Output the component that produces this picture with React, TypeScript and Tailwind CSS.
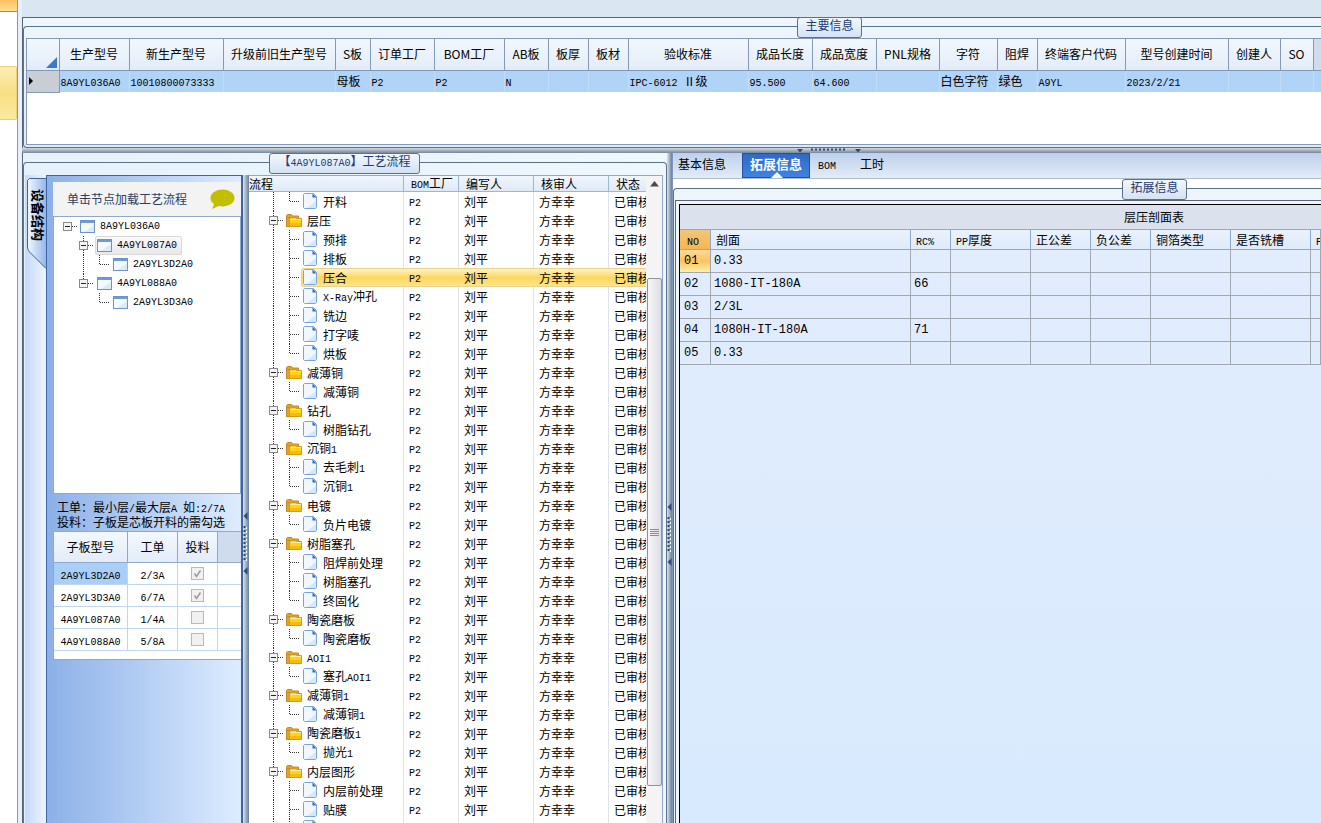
import React, { useState } from 'react';

interface Column {
  title: string;
  width: string;
  value: string;
}

const MAIN_COLUMNS: Column[] = [
  { title: '生产型号', width: 'w-[70px]', value: '8A9YL036A0' },
  { title: '新生产型号', width: 'w-[94px]', value: '10010800073333' },
  { title: '升级前旧生产型号', width: 'w-[112px]', value: '' },
  { title: 'S板', width: 'w-[35px]', value: '母板' },
  { title: '订单工厂', width: 'w-[64px]', value: 'P2' },
  { title: 'BOM工厂', width: 'w-[70px]', value: 'P2' },
  { title: 'AB板', width: 'w-[44px]', value: 'N' },
  { title: '板厚', width: 'w-[40px]', value: '' },
  { title: '板材', width: 'w-[40px]', value: '' },
  { title: '验收标准', width: 'w-[120px]', value: 'IPC-6012 Ⅱ级' },
  { title: '成品长度', width: 'w-[64px]', value: '95.500' },
  { title: '成品宽度', width: 'w-[64px]', value: '64.600' },
  { title: 'PNL规格', width: 'w-[63px]', value: '' },
  { title: '字符', width: 'w-[58px]', value: '白色字符' },
  { title: '阻焊', width: 'w-[40px]', value: '绿色' },
  { title: '终端客户代码', width: 'w-[88px]', value: 'A9YL' },
  { title: '型号创建时间', width: 'w-[103px]', value: '2023/2/21' },
  { title: '创建人', width: 'w-[52px]', value: '' },
  { title: 'SO', width: 'w-[33px]', value: '' },
];

interface StructureNode {
  name: string;
  level: number;
}

const STRUCTURE: StructureNode[] = [
  { name: '8A9YL036A0', level: 0 },
  { name: '4A9YL087A0', level: 1 },
  { name: '2A9YL3D2A0', level: 2 },
  { name: '4A9YL088A0', level: 1 },
  { name: '2A9YL3D3A0', level: 2 },
];

const SUB_BOARDS = [
  { model: '2A9YL3D2A0', order: '2/3A', checked: true },
  { model: '2A9YL3D3A0', order: '6/7A', checked: true },
  { model: '4A9YL087A0', order: '1/4A', checked: false },
  { model: '4A9YL088A0', order: '5/8A', checked: false },
];

interface ProcessRow {
  name: string;
  kind: 'group' | 'step' | 'last';
}

const PROCESS: ProcessRow[] = [
  { name: '开料', kind: 'last' },
  { name: '层压', kind: 'group' },
  { name: '预排', kind: 'step' },
  { name: '排板', kind: 'step' },
  { name: '压合', kind: 'step' },
  { name: 'X-Ray冲孔', kind: 'step' },
  { name: '铣边', kind: 'step' },
  { name: '打字唛', kind: 'step' },
  { name: '烘板', kind: 'last' },
  { name: '减薄铜', kind: 'group' },
  { name: '减薄铜', kind: 'last' },
  { name: '钻孔', kind: 'group' },
  { name: '树脂钻孔', kind: 'last' },
  { name: '沉铜1', kind: 'group' },
  { name: '去毛刺1', kind: 'step' },
  { name: '沉铜1', kind: 'last' },
  { name: '电镀', kind: 'group' },
  { name: '负片电镀', kind: 'last' },
  { name: '树脂塞孔', kind: 'group' },
  { name: '阻焊前处理', kind: 'step' },
  { name: '树脂塞孔', kind: 'step' },
  { name: '终固化', kind: 'last' },
  { name: '陶瓷磨板', kind: 'group' },
  { name: '陶瓷磨板', kind: 'last' },
  { name: 'AOI1', kind: 'group' },
  { name: '塞孔AOI1', kind: 'last' },
  { name: '减薄铜1', kind: 'group' },
  { name: '减薄铜1', kind: 'last' },
  { name: '陶瓷磨板1', kind: 'group' },
  { name: '抛光1', kind: 'last' },
  { name: '内层图形', kind: 'group' },
  { name: '内层前处理', kind: 'step' },
  { name: '贴膜', kind: 'step' },
  { name: '曝光', kind: 'step' },
];

const SECTION_COLUMNS = [
  { title: 'NO', width: 'w-[31px]' },
  { title: '剖面', width: 'w-[200px]' },
  { title: 'RC%', width: 'w-[40px]' },
  { title: 'PP厚度', width: 'w-[80px]' },
  { title: '正公差', width: 'w-[60px]' },
  { title: '负公差', width: 'w-[60px]' },
  { title: '铜箔类型', width: 'w-[80px]' },
  { title: '是否铣槽', width: 'w-[80px]' },
  { title: 'P', width: '' },
];

const SECTION_ROWS = [
  ['01', '0.33', ''],
  ['02', '1080-IT-180A', '66'],
  ['03', '2/3L', ''],
  ['04', '1080H-IT-180A', '71'],
  ['05', '0.33', ''],
];

const TABS = ['基本信息', '拓展信息', 'BOM', '工时'];

// Half-width characters are set in the mono face, the rest stays in the CJK face
const Mixed: React.FC<{ text: string }> = ({ text }) => (
  <>
    {text.split(/([\x20-\x7e]+)/).filter(Boolean).map((part, i) =>
      /^[\x20-\x7e]/.test(part) ? (
        <span key={i} className="whitespace-pre font-['Liberation_Mono',monospace] text-[10px] leading-none">{part}</span>
      ) : (
        <span key={i}>{part}</span>
      )
    )}
  </>
);

const Expander: React.FC<{ x: number }> = ({ x }) => (
  <>
    <rect x={x + 0.5} y="5.5" width="8" height="8" fill="#f4f4f4" stroke="#8a8a8a" />
    <path d={`M${x + 2} 9.5h5`} stroke="#222" />
  </>
);

const WindowIcon = () => (
  <svg width="16" height="14" viewBox="0 0 16 14" className="shrink-0">
    <rect x="0.5" y="0.5" width="14" height="12" fill="#f3f9fe" stroke="#6f93c4" />
    <rect x="1" y="1" width="13" height="2" fill="#6c9bdb" />
    <path d="M4 12L14 5v7z" fill="#dcebf8" />
  </svg>
);

const FolderIcon = () => (
  <svg width="17" height="14" viewBox="0 0 17 14" className="shrink-0">
    <path d="M0.5 12.5v-11l1-1h4l1 1.5h6v3" fill="#dca52c" stroke="#c08a2a" />
    <path d="M0.5 12.500h4v-9h-4z" fill="#dca52c" stroke="#c08a2a" />
    <path d="M3.5 4.5l2-1h4l1 1h5v8h-12z" fill="#ffd21c" stroke="#d99a12" />
    <path d="M4 9h11v3H4z" fill="#f9b90e" />
    <path d="M4 5.5h11" stroke="#fff0a0" />
  </svg>
);

const FileIcon = () => (
  <svg width="15" height="17" viewBox="0 0 15 17" className="shrink-0">
    <path d="M1.5 0.5h9l3 3v11l-1 1h-11l-1-1v-13z" fill="#f0f7ff" stroke="#78a5e2" />
    <path d="M13 8v7H4z" fill="#d5e7fb" />
    <path d="M9.500 0.500l4 4h-4z" fill="#2f69c6" />
  </svg>
);

const GroupTitle: React.FC<{ text: string; className: string }> = ({ text, className }) => (
  <div
    className={`absolute flex h-[21px] items-start justify-center whitespace-nowrap rounded-[3px] border border-[#5b7188] bg-linear-to-b from-[#f2f7fd] to-[#d4e2f3] leading-[14px] text-[#223a75] ${className}`}
  >
    <span><Mixed text={text} /></span>
  </div>
);

const VerticalGrip = () => (
  <svg width="5" height="63" viewBox="0 0 5 63">
    <path d="M4.500 0v8L0.500 4zM4.500 55v8L0.500 59z" fill="#2b4a80" />
    <path d="M1.500 14v36" stroke="#2b4a80" strokeWidth="2" strokeDasharray="2 2" />
    <path d="M3.500 15v36" stroke="#fff" strokeWidth="1" strokeDasharray="2 2" />
  </svg>
);

const MainInfo = () => (
  <section className="border-l border-t border-[#53677d] bg-linear-to-b from-[#f0f6fd] to-[#e0eaf8] pt-2">
    <div className="relative h-[122px] rounded-l-[4px] border-y border-l border-[#5b7188] pb-0.5 pl-0.5 pt-[11px]">
      <GroupTitle text="主要信息" className="-top-[10px] left-[773px] w-[65px]" />
      <div className="h-[107px] overflow-hidden border border-r-0 border-[#8499b5] bg-white">
        <table className="w-full table-fixed border-collapse">
          <thead>
            <tr className="h-[31px] bg-linear-to-b from-[#f3f8fe] to-[#e2ecf8]">
              <th className="w-[32px] border-b border-r border-[#8499b5] p-0">
                <svg width="11" height="11" viewBox="0 0 11 11" className="ml-auto mr-0.5 mt-4">
                  <path d="M11 0v11H0z" fill="#3f78d4" />
                </svg>
              </th>
              {MAIN_COLUMNS.map(col => (
                <th key={col.title} className={`${col.width} whitespace-nowrap border-b border-r border-[#8499b5] p-0 font-normal`}>
                  {col.title}
                </th>
              ))}
              <th className="border-b border-[#8499b5] bg-[#cfdcee] p-0" />
            </tr>
          </thead>
          <tbody>
            <tr className="h-[22px] bg-[#b0d3f8]">
              <td className="border-b border-r border-[#8499b5] bg-[#c9cdd4] p-0 pl-0.5">
                <svg width="5" height="8" viewBox="0 0 5 8"><path d="M0 0l4 4-4 4z" fill="#000" /></svg>
              </td>
              {MAIN_COLUMNS.map(col => (
                <td key={col.title} className="whitespace-nowrap border-r border-[#c3dcf8] p-0 pl-px">
                  <Mixed text={col.value} />
                </td>
              ))}
              <td className="p-0" />
            </tr>
          </tbody>
        </table>
      </div>
    </div>
  </section>
);

const StructureTree = () => {
  const [selected, setSelected] = useState('4A9YL087A0');

  return (
    <ul className="h-[278px] border border-[#8fa9cd] bg-white">
      {STRUCTURE.map((node, index) => (
        <li key={node.name} className="flex h-[19px] items-center">
          {node.level === 0 && (
            <svg width="24" height="19" className="shrink-0">
              <path d="M18 9.5h6" stroke="#333" strokeDasharray="1 1" />
              <Expander x={9} />
            </svg>
          )}
          {node.level === 1 && (
            <svg width="41" height="19" className="shrink-0">
              <path d={index === 1 ? 'M29.500 0v19' : 'M29.500 0v9'} stroke="#333" strokeDasharray="1 1" />
              <path d="M34 9.5h6" stroke="#333" strokeDasharray="1 1" />
              <Expander x={25} />
            </svg>
          )}
          {node.level === 2 && (
            <svg width="57" height="19" className="shrink-0">
              {index === 2 && <path d="M29.500 0v19" stroke="#333" strokeDasharray="1 1" />}
              <path d="M45.500 0v10M46 9.500h9" stroke="#333" strokeDasharray="1 1" fill="none" />
            </svg>
          )}
          <button
            type="button"
            onClick={() => setSelected(node.name)}
            className={`flex h-[19px] items-center gap-1 rounded-[2px] border pl-px pr-1 ${
              selected === node.name ? 'border-[#d9d9d9] bg-linear-to-b from-[#fafafa] to-[#e8e8e8]' : 'border-transparent'
            }`}
          >
            <WindowIcon />
            <Mixed text={node.name} />
          </button>
        </li>
      ))}
    </ul>
  );
};

const StructurePanel = () => (
  <div className="flex w-[218px] shrink-0">
    {/* Vertical tab */}
    <div className="w-[21px] shrink-0 bg-linear-to-r from-[#c6dafb] to-[#edf4ff]">
      <button type="button" className="relative mt-[2px] flex h-[93px] w-[21px] items-start">
        <svg width="21" height="93" viewBox="0 0 21 93" className="absolute left-0 top-0">
          <defs>
            <linearGradient id="tab" x1="0" x2="1">
              <stop offset="0" stopColor="#f2f8ff" />
              <stop offset="1" stopColor="#94b7ea" />
            </linearGradient>
          </defs>
          <path d="M21 1.500H4.500l-2 2V70c0 3 2 5 4 7L21 91.500" fill="url(#tab)" stroke="#3e5f97" />
        </svg>
        <span className="relative block pl-1.5 pt-3 text-left text-[13px] font-bold leading-[15px] [text-orientation:sideways] [writing-mode:vertical-rl]">
          设备结构
        </span>
      </button>
    </div>
    <div className="flex min-w-0 flex-1 flex-col border-l border-r-2 border-t border-[#3d65a3] bg-linear-to-r from-[#8cb0e7] to-[#deecff] pl-1.5 pt-1.5">
      <div className="flex h-[34px] items-center justify-between bg-[#f3f3f3] pl-3.5 pr-1.5">
        <span className="text-[#2b3d63]">单击节点加载工艺流程</span>
        <svg width="25" height="21" viewBox="0 0 25 21">
          <ellipse cx="12.500" cy="9" rx="12" ry="8.500" fill="#c0c000" />
          <path d="M5 13L2 20l9-4z" fill="#c0c000" />
        </svg>
      </div>
      <StructureTree />
      <div className="h-[37px] pl-1 pt-1.5 leading-[14px]">
        <p><Mixed text="工单：最小层/最大层A 如:2/7A" /></p>
        <p>投料：子板是芯板开料的需勾选</p>
      </div>
      <div className="h-[129px] overflow-hidden border border-r-0 border-[#8fa9cd] bg-white">
        <table className="w-full table-fixed border-separate border-spacing-0">
          <thead>
            <tr className="h-[31px] bg-linear-to-b from-[#f3f8fe] to-[#e2ecf8]">
              <th className="w-[74px] border-b border-r border-[#8fa9cd] p-0 font-normal">子板型号</th>
              <th className="w-[50px] border-b border-r border-[#8fa9cd] p-0 font-normal">工单</th>
              <th className="w-[40px] border-b border-r border-[#8fa9cd] p-0 font-normal">投料</th>
              <th className="border-b border-[#8fa9cd] bg-[#cfdcee] p-0" />
            </tr>
          </thead>
          <tbody>
            {SUB_BOARDS.map((row, index) => (
              <tr key={row.model} className="h-[22px]">
                <td className={`border-b border-r border-[#c0d6f0] p-0 text-center ${index === 0 ? 'bg-[#a9cff8]' : ''}`}>
                  <Mixed text={row.model} />
                </td>
                <td className="border-b border-r border-[#c0d6f0] p-0 text-center"><Mixed text={row.order} /></td>
                <td className="border-b border-r border-[#c0d6f0] p-0">
                  <label className="relative mx-auto block size-[13px]">
                    <input
                      type="checkbox"
                      aria-label={`投料 ${row.model}`}
                      defaultChecked={row.checked}
                      disabled
                      className="block size-[13px] appearance-none border border-[#b9b9b9] bg-[#f1f1f1]"
                    />
                    {row.checked && (
                      <svg width="13" height="13" viewBox="0 0 13 13" className="absolute left-0 top-0">
                        <path d="M3.500 6.500l2 3 4-6" fill="none" stroke="#9a9a9a" strokeWidth="1.500" />
                      </svg>
                    )}
                  </label>
                </td>
                <td className="border-b border-[#c0d6f0] p-0" />
              </tr>
            ))}
          </tbody>
        </table>
      </div>
    </div>
  </div>
);

const ProcessCell: React.FC<{ row: ProcessRow; active: boolean }> = ({ row, active }) => {
  if (row.kind === 'group') {
    return (
      <div className="flex h-[19px] items-center">
        <svg width="37" height="19" className="shrink-0">
          <path d="M24.500 0v19M29 9.500h6" stroke="#333" strokeDasharray="1 1" />
          <Expander x={20} />
        </svg>
        <FolderIcon />
        <span className="pl-1"><Mixed text={row.name} /></span>
      </div>
    );
  }
  return (
    <div className="flex h-[19px]">
      <svg width="52" height="19" className="shrink-0 bg-white">
        <path d="M24.500 0v19" stroke="#333" strokeDasharray="1 1" />
        <path d={row.kind === 'last' ? 'M40.500 0v10' : 'M40.500 0v19'} stroke="#333" strokeDasharray="1 1" />
        <path d="M41 9.500h9" stroke="#333" strokeDasharray="1 1" />
      </svg>
      <div
        className={`flex min-w-0 flex-1 items-center whitespace-nowrap border-y border-l pl-px ${
          active
            ? 'rounded-l-[3px] border-[#ead28f] bg-linear-to-b from-[#fff3c4] via-[#fdd75c] to-[#fee58c]'
            : 'border-transparent'
        }`}
      >
        <FileIcon />
        <span className="pl-[5px]"><Mixed text={row.name} /></span>
      </div>
    </div>
  );
};

const ProcessPanel = () => {
  const [current, setCurrent] = useState(4);

  return (
    <div className="flex min-w-0 flex-1 overflow-hidden border-r border-t border-[#8fa9cd] bg-white">
      <div className="min-w-0 flex-1 overflow-hidden">
        <table className="w-full table-fixed border-separate border-spacing-0">
          <thead>
            <tr className="h-[15px] bg-linear-to-b from-[#f1f6fd] to-[#dee9f6] text-left leading-[13px]">
              <th className="w-[155px] border-b border-r border-[#9fb6d3] p-0 font-normal">流程</th>
              <th className="w-[55px] whitespace-nowrap border-b border-r border-[#9fb6d3] p-0 pl-[7px] font-normal"><Mixed text="BOM工厂" /></th>
              <th className="w-[75px] border-b border-r border-[#9fb6d3] p-0 pl-[7px] font-normal">编写人</th>
              <th className="w-[75px] border-b border-r border-[#9fb6d3] p-0 pl-[7px] font-normal">核审人</th>
              <th className="whitespace-nowrap border-b border-[#9fb6d3] p-0 pl-[7px] font-normal">状态</th>
            </tr>
          </thead>
          <tbody>
            {PROCESS.map((row, index) => {
              const active = index === current;
              const cell = active
                ? 'border-y border-[#ead28f] bg-linear-to-b from-[#fff3c4] via-[#fdd75c] to-[#fee58c]'
                : 'border-r border-[#e0e3e8]';
              return (
                <tr key={index} onClick={() => setCurrent(index)} className="h-[19px] leading-[14px]">
                  <td className={active ? 'p-0' : 'border-r border-[#e0e3e8] p-0'}>
                    <ProcessCell row={row} active={active} />
                  </td>
                  <td className={`p-0 pl-[5px] ${cell}`}><Mixed text="P2" /></td>
                  <td className={`p-0 pl-[5px] ${cell}`}>刘平</td>
                  <td className={`p-0 pl-[5px] ${cell}`}>方幸幸</td>
                  <td className={`overflow-hidden whitespace-nowrap p-0 pl-[5px] ${active ? cell : ''}`}>已审核</td>
                </tr>
              );
            })}
          </tbody>
        </table>
      </div>
      {/* Scrollbar */}
      <div className="flex w-4 shrink-0 flex-col items-center bg-[#f4f4f5] pt-[5px]">
        <svg width="9" height="6" viewBox="0 0 9 6"><path d="M4.500 0L9 5.500H0z" fill="#4a4a4a" /></svg>
        <div className="mt-[91px] flex h-[508px] w-[15px] items-center justify-center rounded-[2px] border border-[#8d9298] bg-linear-to-r from-[#f6f6f8] to-[#dcdfe5]">
          <svg width="9" height="7" viewBox="0 0 9 7">
            <path d="M0 0.500h9M0 2.500h9M0 4.500h9M0 6.500h9" stroke="#8a8f96" />
          </svg>
        </div>
      </div>
    </div>
  );
};

const ExtendedInfo = () => {
  const [tab, setTab] = useState('拓展信息');

  return (
    <section className="flex min-w-0 flex-1 flex-col overflow-hidden border-l border-[#7f97b8] bg-white">
      <div className="flex h-[26px] shrink-0 items-stretch border-b border-[#aebccf] bg-linear-to-b from-[#bdd0ec] to-[#e3ecf8]">
        {TABS.map(name => (
          <button
            key={name}
            type="button"
            onClick={() => setTab(name)}
            className={
              tab === name
                ? 'relative ml-2 border border-[#2350a0] bg-linear-to-b from-[#2f6ac8] to-[#3f82e0] px-[7px] pb-1 text-[13px] font-bold text-white'
                : 'px-2 pb-1 first:pl-[5px] last:ml-2'
            }
          >
            <Mixed text={name} />
            {tab === name && (
              <svg width="12" height="6" viewBox="0 0 12 6" className="absolute -bottom-px left-7">
                <path d="M6 0l6 6H0z" fill="#fff" />
              </svg>
            )}
          </button>
        ))}
      </div>
      <div className="relative mt-[9px] flex flex-1 flex-col rounded-tl-[4px] border-l border-t border-[#5b7188] bg-[#eef5fd] pl-px pt-[11px]">
        <GroupTitle text="拓展信息" className="-top-[10px] left-[448px] w-[65px]" />
        <div className="flex flex-1 flex-col border-l border-t border-[#5b6570] pl-[3px] pt-[3px]">
          <div className="flex-1 border-l border-t border-black bg-linear-to-b from-[#e2edfd] to-[#d8eafe]">
            <table className="w-full table-fixed border-separate border-spacing-0">
              <caption className="h-6 bg-[#dbe2ee] pl-[307px] text-center leading-[23px]">层压剖面表</caption>
              <thead>
                <tr className="h-[21px] bg-linear-to-b from-[#eaf2fc] to-[#dfeafa]">
                  {SECTION_COLUMNS.map((col, index) => (
                    <th
                      key={col.title}
                      className={`${col.width} overflow-hidden whitespace-nowrap border-b border-r border-t border-[#8fa9cd] p-0 text-left font-normal ${
                        index === 0 ? 'bg-linear-to-b from-[#f0c67c] to-[#f7b64c] pl-[7px]' : 'pl-[5px]'
                      }`}
                    >
                      <Mixed text={col.title} />
                    </th>
                  ))}
                </tr>
              </thead>
              <tbody className="font-['Liberation_Mono',monospace]">
                {SECTION_ROWS.map((row, index) => (
                  <tr key={row[0]} className="h-[23px]">
                    {SECTION_COLUMNS.map((col, c) => (
                      <td
                        key={col.title}
                        className={`border-b border-r border-[#a3a8b0] p-0 ${
                          c === 0 && index === 0 ? 'bg-linear-to-b from-[#fbd9a0] via-[#fbc45c] to-[#fff0a8]' : ''
                        } ${c === 0 ? 'pl-1' : 'pl-[3px]'}`}
                      >
                        {row[c] || ''}
                      </td>
                    ))}
                  </tr>
                ))}
              </tbody>
            </table>
          </div>
        </div>
      </div>
    </section>
  );
};

const App: React.FC = () => {
  return (
    <div className="flex h-screen overflow-hidden bg-[#e9eff8] font-['Noto_Sans_CJK_SC',sans-serif] text-xs text-black">
      {/* Edge of the navigation pane */}
      <aside className="w-[18px] shrink-0 border-r border-[#8a98ab] bg-white">
        <div className="h-3 border-b border-[#9b8a68] bg-linear-to-b from-[#fdbf62] to-[#fde08e]" />
        <div className="mt-[54px] h-[54px] rounded-r-[2px] border border-l-0 border-[#e9cf7a] bg-linear-to-b from-[#fbeeb4] via-[#f7df84] to-[#fae9a0]" />
      </aside>

      <main className="ml-1 flex min-w-0 flex-1 flex-col">
        <div className="h-[17px] shrink-0 bg-[#dbe6f3]" />
        <MainInfo />

        {/* Horizontal splitter */}
        <div className="flex h-[5px] shrink-0 bg-linear-to-b from-[#d5dbe2] to-[#76879b] pl-[775px]">
          <svg width="64" height="5" viewBox="0 0 64 5">
            <path d="M0 1h6L3 4.500zM58 1h6L61 4.500z" fill="#2b4a80" />
            <path d="M14 1.500h36" stroke="#2b4a80" strokeWidth="2" strokeDasharray="2 2" />
          </svg>
        </div>

        <div className="flex min-h-0 flex-1">
          <section className="flex w-[645px] shrink-0 flex-col overflow-hidden border-l border-[#53677d] bg-linear-to-r from-[#e6f1fc] to-[#eff7fe] pt-[9px]">
            <div className="relative flex min-h-0 flex-1 rounded-t-[4px] border-x border-t border-[#5b7188] pl-px pr-[3px] pt-3">
              <GroupTitle text="【4A9YL087A0】工艺流程" className="-top-[10px] left-[245px] w-[151px]" />
              <StructurePanel />
              <div className="w-1.5 shrink-0 bg-linear-to-r from-[#dbe5f1] to-[#6c7f96] pt-[337px]">
                <VerticalGrip />
              </div>
              <ProcessPanel />
            </div>
          </section>
          <div className="w-[5px] shrink-0 bg-linear-to-r from-[#dbe5f1] to-[#6c7f96] pt-[350px]">
            <VerticalGrip />
          </div>
          <ExtendedInfo />
        </div>
      </main>
    </div>
  );
};

export default App;
